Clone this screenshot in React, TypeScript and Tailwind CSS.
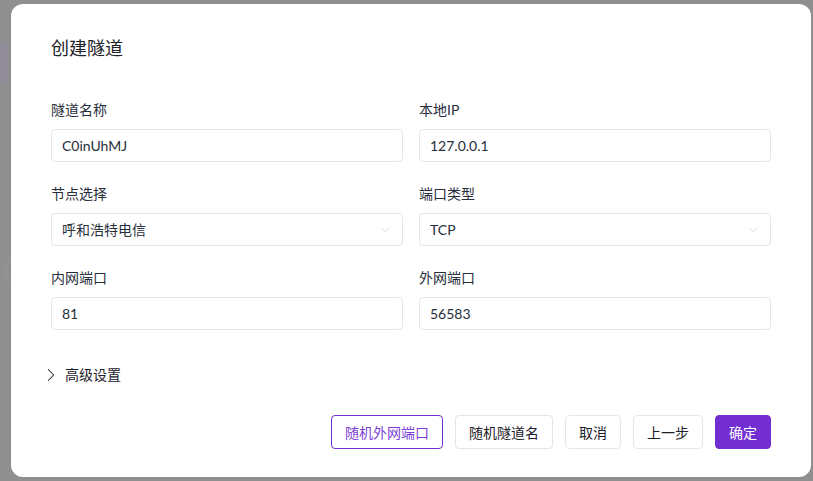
import { ChevronDown, ChevronRight } from 'lucide-react';

const font = { fontFamily: 'Lato, "Noto Sans CJK SC", sans-serif' };

function Field({ label, value, select = false }: { label: string; value: string; select?: boolean }) {
  return (
    <div className="flex flex-col">
      <label className="text-[14px] leading-[22px] text-[#272e3b] mb-2">{label}</label>
      <div className="h-[33px] flex items-center justify-between rounded-[4px] border border-[#e5e6eb] bg-white pl-[10px] pr-[10px]">
        <span className="text-[14px] text-[#272e3b]">{value}</span>
        {select && <ChevronDown size={14} strokeWidth={1.2} className="text-[#c9cdd4]" />}
      </div>
    </div>
  );
}

export default function App() {
  return (
    <div className="relative h-[481px] w-[813px] overflow-hidden bg-[#8f8f8f]" style={font}>
      {/* page behind the mask */}
      <div className="absolute left-[-6px] top-[42px] h-[41px] w-[14px] rounded-[4px] bg-[#918c9a]" />
      <div className="absolute left-[5px] top-[258px] h-[26px] w-[26px] rounded-full border border-[#9a9a9a]" />

      <div className="relative ml-[11px] mt-[4px] flex h-[473px] w-[800px] flex-col rounded-[12px] bg-white px-10 pt-[32px] pb-[28px]">
        <h2 className="text-[18px] leading-[24px] text-[#1d2129]">创建隧道</h2>

        <div className="mt-[39px] grid grid-cols-2 gap-x-4 gap-y-[21px]">
          <Field label="隧道名称" value="C0inUhMJ" />
          <Field label="本地IP" value="127.0.0.1" />
          <Field label="节点选择" value="呼和浩特电信" select />
          <Field label="端口类型" value="TCP" select />
          <Field label="内网端口" value="81" />
          <Field label="外网端口" value="56583" />
        </div>

        <div className="mt-[34px] -ml-[11px] flex items-center gap-[3px] text-[14px] leading-[22px] text-[#1d2129]">
          <ChevronRight size={22} strokeWidth={1.1} />
          <span>高级设置</span>
        </div>

        <div className="mt-auto flex justify-end gap-3 text-[14px]">
          <button className="h-[34px] rounded-[4px] border border-[#722ed1] px-[13px] text-[#7b3fd6]">随机外网端口</button>
          <button className="h-[34px] rounded-[4px] border border-[#e5e6eb] px-[13px] text-[#1d2129]">随机隧道名</button>
          <button className="h-[34px] rounded-[4px] border border-[#e5e6eb] px-[13px] text-[#1d2129]">取消</button>
          <button className="h-[34px] rounded-[4px] border border-[#e5e6eb] px-[13px] text-[#1d2129]">上一步</button>
          <button className="h-[34px] rounded-[4px] border border-[#722ed1] bg-[#722ed1] px-[13px] text-white">确定</button>
        </div>
      </div>
    </div>
  );
}
